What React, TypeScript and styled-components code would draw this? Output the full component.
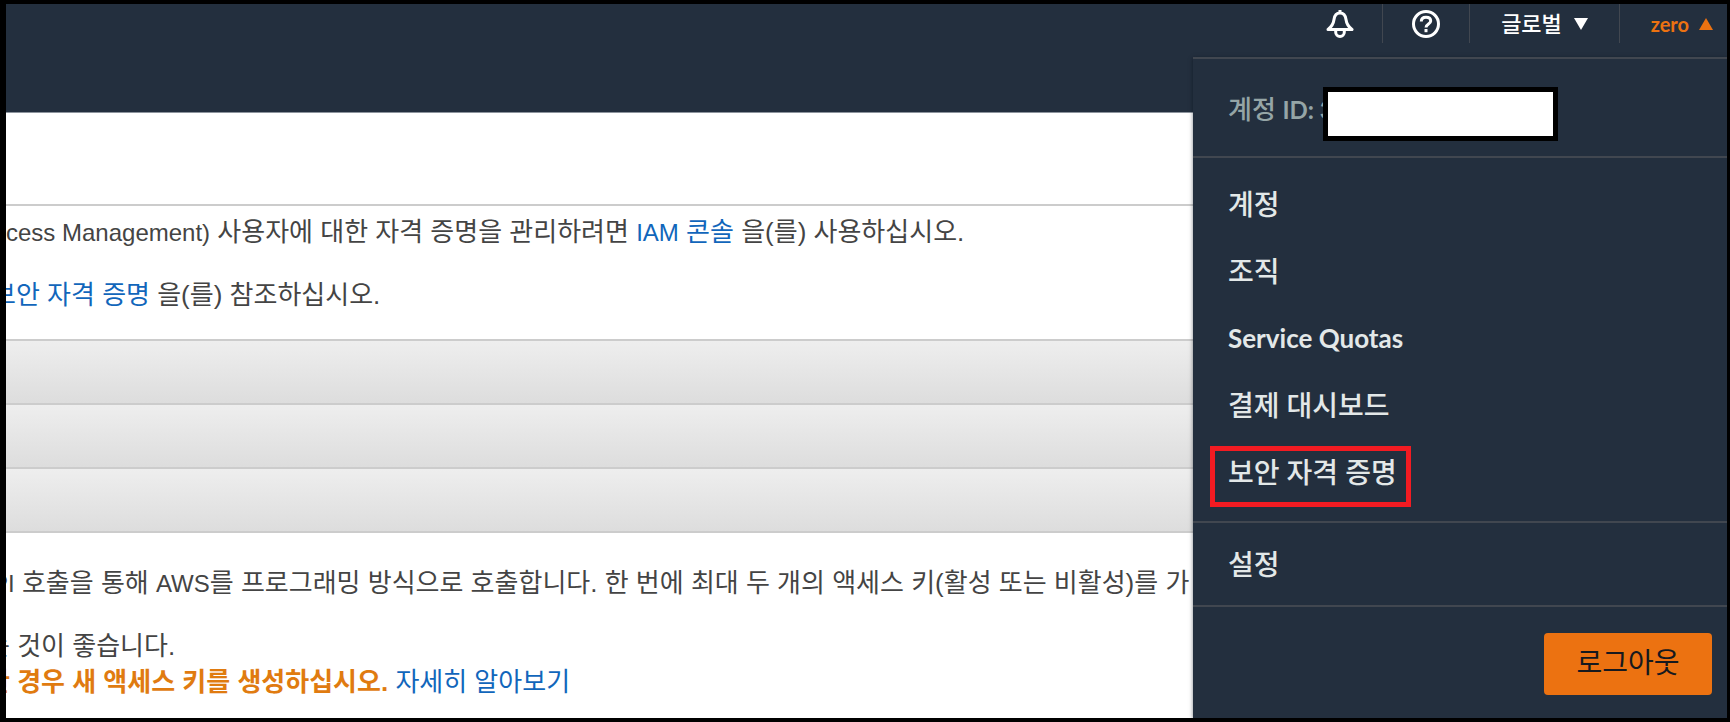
import React from "react";
import styled, { createGlobalStyle } from "styled-components";

const navy = "#232f3e";
const line = "#414750";
const orange = "#ec7211";
const uiFont = `Lato, "Noto Sans CJK KR", sans-serif`;

const GlobalStyle = createGlobalStyle`
  * { box-sizing: border-box; }
  body { margin: 0; background: #000; }
  ul { list-style: none; margin: 0; padding: 0; }
`;

const Page = styled.div`
  position: relative;
  display: flex;
  flex-direction: column;
  min-height: 100vh;
  border: solid #000;
  border-width: 4px 3px 4px 6px;
  background: #fff;
  overflow: hidden;
`;

const Header = styled.header`
  height: 109px;
  flex: none;
  background: ${navy};
  border-bottom: 1px solid #8d949d;
`;

const Tools = styled.nav`
  display: flex;
  justify-content: flex-end;
  height: 39px;
`;

const Tool = styled.button<{ $width: number; $active?: boolean }>`
  display: flex;
  align-items: center;
  justify-content: ${(p) => (p.$active ? "flex-end" : "center")};
  gap: ${(p) => (p.$active ? 10 : 12)}px;
  width: ${(p) => p.$width}px;
  height: 39px;
  margin: 0;
  padding: 0 ${(p) => (p.$active ? 14 : 0)}px 0 0;
  border: 0;
  background: none;
  color: ${(p) => (p.$active ? orange : "#fff")};
  font: ${(p) => (p.$active ? "700 20px" : "500 22px")}/24px ${uiFont};
  cursor: pointer;

  & + & {
    border-left: 1px solid ${line};
  }
`;

const Main = styled.main`
  flex: 1;
  color: #444;
  font: 26px/36px "Liberation Sans", "Noto Sans CJK KR", sans-serif;
  white-space: nowrap;
`;

const TitleBand = styled.div`
  height: 93px;
  border-bottom: 2px solid #ccc;
`;

const Intro = styled.section`
  display: flex;
  flex-direction: column;
  gap: 26px;
  height: 133px;
  padding-top: 8px;
`;

const Details = styled.section`
  padding-top: 32px;
`;

/* $cut is the width of the line start that has scrolled off the left edge */
const Line = styled.p<{ $cut?: number; $spaced?: boolean }>`
  margin: 0 0 ${(p) => (p.$spaced ? 26 : 0)}px -${(p) => p.$cut ?? 0}px;
`;

const En = styled.span<{ $strong?: boolean }>`
  font-size: 24px;
  font-weight: ${(p) => (p.$strong ? 700 : "inherit")};
`;

const TextLink = styled.a`
  color: #1166bb;
  text-decoration: none;
`;

const Warning = styled.strong`
  color: #e07b10;
  font-weight: 700;
`;

const Panels = styled.div`
  border-top: 2px solid #ccc;
`;

const Panel = styled.div`
  height: 64px;
  border-bottom: 2px solid #ccc;
  background: linear-gradient(#eee, #ddd);
`;

const Menu = styled.aside`
  position: absolute;
  top: 53px;
  right: 0;
  bottom: 0;
  width: 534px;
  display: flex;
  flex-direction: column;
  background: ${navy};
  box-shadow: 0 1px 4px rgba(0, 10, 20, 0.5);
  border-top: 2px solid ${line};
  font: 28px/36px ${uiFont};
`;

const Account = styled.div`
  display: flex;
  flex: none;
  align-items: center;
  height: 99px;
  padding: 4px 35px 0;
  border-bottom: 2px solid ${line};
  color: #95a5a6;
  font-size: 26px;
  font-weight: 500;
`;

const AccountLabel = styled.span`
  width: 95px;
  overflow: hidden;
  white-space: nowrap;
`;

const Redaction = styled.span`
  width: 235px;
  height: 54px;
  margin-top: 8px;
  border: 5px solid #000;
  background: #fff;
`;

const MenuList = styled.ul<{ $pad: string }>`
  padding: ${(p) => p.$pad};
  border-bottom: 2px solid ${line};
`;

const MenuItem = styled.li<{ $marked?: boolean }>`
  position: relative;
  width: fit-content;
  height: 67px;
  padding: 0 35px;

  &::after {
    content: "";
    display: ${(p) => (p.$marked ? "block" : "none")};
    position: absolute;
    inset: 8px 21px -2px 17px;
    border: 5px solid #f31b22;
    pointer-events: none;
  }
`;

const MenuLink = styled.a<{ $latin?: boolean }>`
  display: flex;
  align-items: center;
  height: 67px;
  color: #e3e8e8;
  font-size: ${(p) => (p.$latin ? 26 : 28)}px;
  font-weight: ${(p) => (p.$latin ? 700 : 500)};
  text-decoration: none;
`;

const Footer = styled.div`
  display: flex;
  justify-content: flex-end;
  padding: 26px 15px 20px;
`;

const Logout = styled.button`
  width: 168px;
  height: 62px;
  padding: 0 0 4px;
  border: 0;
  border-radius: 4px;
  background: ${orange};
  color: #16191f;
  font: 28px/36px ${uiFont};
  cursor: pointer;
`;

const Bell = () => (
  <svg width="28" height="28" viewBox="0 0 28 28" fill="none" stroke="#fff" strokeWidth="3" strokeLinejoin="round">
    <path d="M14 0v3" />
    <path d="M2 19.500C6 16.500 7.500 13.500 8 9.500 8.500 5.500 10.800 3 14 3s5.500 2.500 6 6.500C20.500 13.500 22 16.500 26 19.500Z" />
    <path d="M9.700 20v2.200a4.300 4.300 0 0 0 8.600 0V20" />
  </svg>
);

const Help = () => (
  <svg width="28" height="28" viewBox="0 0 28 28" fill="none" stroke="#fff" strokeWidth="3">
    <circle cx="14" cy="14" r="12.500" />
    <path d="M9.300 11.500c0-2.700 1.900-4.200 4.700-4.200s4.700 1.500 4.700 3.800c0 3-4.700 2.900-4.700 6.400" />
    <path d="M14 19v3.200" />
  </svg>
);

const Caret = ({ up }: { up?: boolean }) => (
  <svg width="14" height="12" viewBox="0 0 14 12" fill="currentColor">
    <path d={up ? "M7 0l7 12H0z" : "M0 0h14L7 12z"} />
  </svg>
);

const services = [
  { label: "계정" },
  { label: "조직" },
  { label: "Service Quotas", latin: true },
  { label: "결제 대시보드" },
  { label: "보안 자격 증명", marked: true },
];

export default function App() {
  return (
    <>
      <GlobalStyle />
      <Page>
        <Header>
          <Tools>
            <Tool $width={84} aria-label="알림"><Bell /></Tool>
            <Tool $width={87} aria-label="도움말"><Help /></Tool>
            <Tool $width={150}>글로벌 <Caret /></Tool>
            <Tool $width={108} $active aria-expanded="true">zero <Caret up /></Tool>
          </Tools>
        </Header>
        <Main>
          <TitleBand />
          <Intro>
            <Line>
              <En>cess Management)</En> 사용자에 대한 자격 증명을 관리하려면{" "}
              <TextLink href="#iam"><En>IAM</En> 콘솔</TextLink> 을(를) 사용하십시오.
            </Line>
            <Line $cut={14}>
              <TextLink href="#security">보안 자격 증명</TextLink> 을(를) 참조하십시오.
            </Line>
          </Intro>
          <Panels>
            <Panel />
            <Panel />
            <Panel />
          </Panels>
          <Details>
            <Line $cut={14} $spaced>
              <En>PI</En> 호출을 통해 <En>AWS</En>를 프로그래밍 방식으로 호출합니다. 한 번에 최대 두 개의 액세스 키(활성 또는 비활성)를 가
            </Line>
            <Line $cut={20}>는 것이 좋습니다.</Line>
            <Line $cut={20}>
              <Warning>한 경우 새 액세스 키를 생성하십시오.</Warning>{" "}
              <TextLink href="#more">자세히 알아보기</TextLink>
            </Line>
          </Details>
        </Main>
        <Menu>
          <Account>
            <AccountLabel>계정 <En $strong>ID: 3</En></AccountLabel>
            <Redaction />
          </Account>
          <MenuList $pad="12px 0 16px">
            {services.map((s) => (
              <MenuItem key={s.label} $marked={s.marked}>
                <MenuLink href="#menu" $latin={s.latin}>{s.label}</MenuLink>
              </MenuItem>
            ))}
          </MenuList>
          <MenuList $pad="7px 0 8px">
            <MenuItem>
              <MenuLink href="#settings">설정</MenuLink>
            </MenuItem>
          </MenuList>
          <Footer>
            <Logout>로그아웃</Logout>
          </Footer>
        </Menu>
      </Page>
    </>
  );
}
